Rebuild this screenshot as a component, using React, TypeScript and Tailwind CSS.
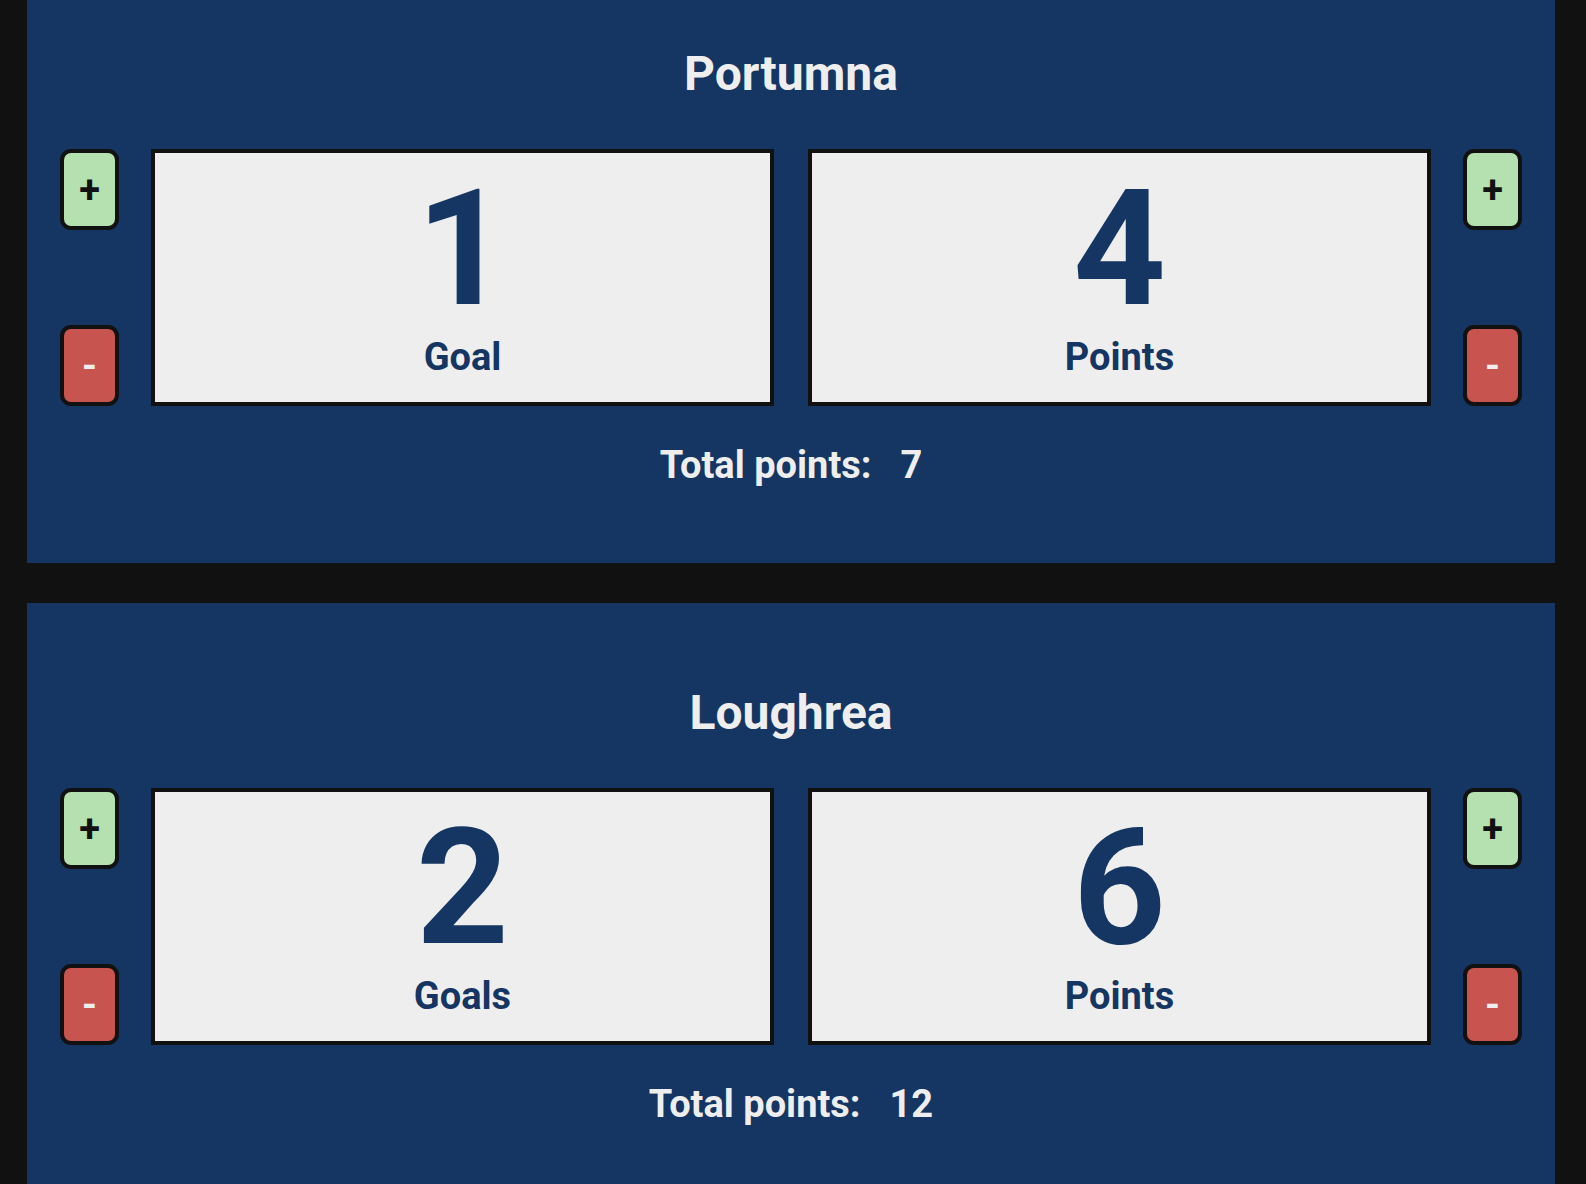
import React, { useState } from "react";

type Team = {
  name: string;
  goals: number;
  points: number;
};

const INITIAL_TEAMS: Team[] = [
  { name: "Portumna", goals: 1, points: 4 },
  { name: "Loughrea", goals: 2, points: 6 },
];

function StepButton({
  kind,
  onClick,
}: {
  kind: "plus" | "minus";
  onClick: () => void;
}): React.ReactElement {
  const styles =
    kind === "plus"
      ? "bg-[#b5e0b0] text-[#111111]"
      : "bg-[#c8544f] text-[#eeeeee]";
  return (
    <button
      type="button"
      onClick={onClick}
      className={`flex h-[81px] w-[59px] items-center justify-center rounded-[11px] border-[4px] border-[#111111] text-[38px] font-bold leading-none ${styles}`}
    >
      {kind === "plus" ? "+" : "-"}
    </button>
  );
}

function ScoreBox({ value, label }: { value: number; label: string }): React.ReactElement {
  return (
    <div className="flex h-[257px] flex-1 flex-col items-center border-[4px] border-[#111111] bg-[#eeeeee] pt-[15px] text-[#153562]">
      <span className="text-[162px] font-bold leading-none">{value}</span>
      <span className="mt-[8px] text-[38px] font-bold leading-none">{label}</span>
    </div>
  );
}

function TeamPanel({
  team,
  onChange,
}: {
  team: Team;
  onChange: (next: Team) => void;
}): React.ReactElement {
  const total = team.goals * 3 + team.points;
  const goalLabel = team.goals === 1 ? "Goal" : "Goals";
  const pointLabel = team.points === 1 ? "Point" : "Points";

  return (
    <section className="bg-[#153562] pb-[79px] pt-[82px] text-[#eeeeee]">
      <h2 className="text-center text-[48px] font-bold leading-[56px]">{team.name}</h2>

      {/* Score row */}
      <div className="mt-[47px] flex items-stretch gap-[32px] pl-[33px] pr-[33px]">
        <div className="flex flex-col justify-between">
          <StepButton kind="plus" onClick={() => onChange({ ...team, goals: team.goals + 1 })} />
          <StepButton
            kind="minus"
            onClick={() => onChange({ ...team, goals: Math.max(0, team.goals - 1) })}
          />
        </div>
        <div className="flex flex-1 gap-[34px]">
          <ScoreBox value={team.goals} label={goalLabel} />
          <ScoreBox value={team.points} label={pointLabel} />
        </div>
        <div className="flex flex-col justify-between">
          <StepButton kind="plus" onClick={() => onChange({ ...team, points: team.points + 1 })} />
          <StepButton
            kind="minus"
            onClick={() => onChange({ ...team, points: Math.max(0, team.points - 1) })}
          />
        </div>
      </div>

      <p className="mt-[40px] text-center text-[38px] font-bold leading-none">
        Total points:<span className="ml-[29px]">{total}</span>
      </p>
    </section>
  );
}

export default function App(): React.ReactElement {
  const [teams, setTeams] = useState<Team[]>(INITIAL_TEAMS);

  return (
    <div
      className="min-h-screen overflow-hidden bg-[#111111] pl-[27px] pr-[31px]"
      style={{ fontFamily: "Roboto, 'Liberation Sans', sans-serif" }}
    >
      <div className="-mt-[36px] flex flex-col gap-[40px] pb-[40px]">
        {teams.map((team, i) => (
          <TeamPanel
            key={team.name}
            team={team}
            onChange={(next) => setTeams((prev) => prev.map((t, j) => (j === i ? next : t)))}
          />
        ))}
      </div>
    </div>
  );
}
